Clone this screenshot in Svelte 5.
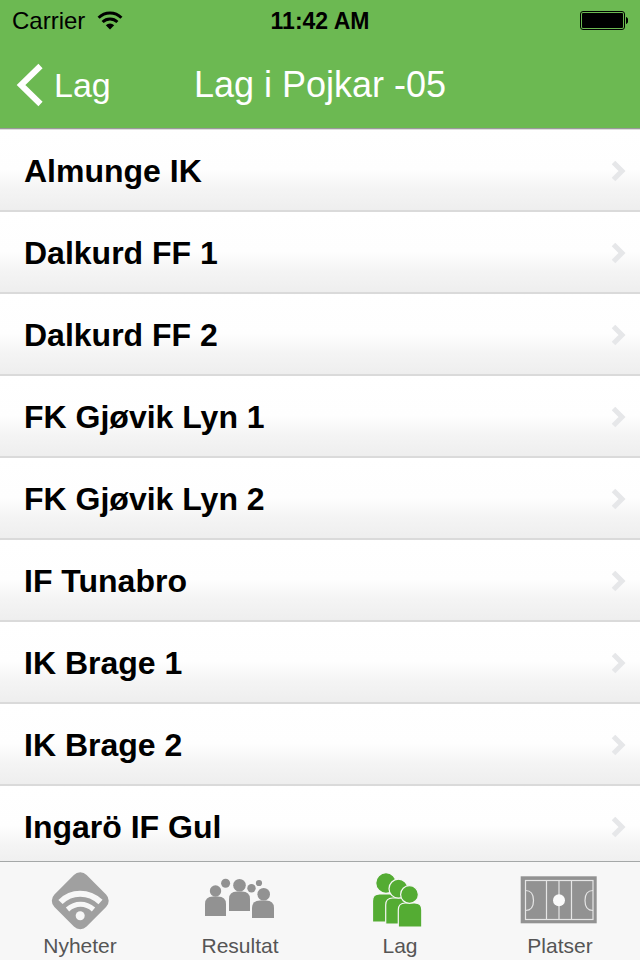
<script lang="ts">
	interface Tab {
		id: string;
		label: string;
	}

	const teams = [
		'Almunge IK',
		'Dalkurd FF 1',
		'Dalkurd FF 2',
		'FK Gjøvik Lyn 1',
		'FK Gjøvik Lyn 2',
		'IF Tunabro',
		'IK Brage 1',
		'IK Brage 2',
		'Ingarö IF Gul'
	];

	const tabs: Tab[] = [
		{ id: 'news', label: 'Nyheter' },
		{ id: 'results', label: 'Resultat' },
		{ id: 'teams', label: 'Lag' },
		{ id: 'places', label: 'Platser' }
	];

	let active = $state('teams');
</script>

<div class="app">
	<header>
		<div class="status">
			<div class="carrier">
				<span>Carrier</span>
				<svg width="26" height="20" viewBox="0 0 26 20" aria-hidden="true">
					<g fill="none" stroke="#000" stroke-width="3">
						<path d="M1.6 6.8a16.2 16.2 0 0 1 22.8 0" />
						<path d="M5.6 11a10.6 10.6 0 0 1 14.8 0" />
					</g>
					<path d="M8.8 14.2a6 6 0 0 1 8.4 0L13 18.6z" />
				</svg>
			</div>
			<div class="time">11:42 AM</div>
			<div class="battery">
				<svg width="48" height="20" viewBox="0 0 48 20" aria-label="Battery full" role="img">
					<rect x="0.5" y="0.5" width="44" height="18" rx="2.5" fill="none" stroke="#000" />
					<rect x="2" y="2" width="41" height="15" rx="1" />
					<path d="M46 6c3 1 3 6 0 7z" />
				</svg>
			</div>
		</div>

		<nav class="navbar" aria-label="Navigation">
			<button class="back" type="button">
				<svg width="28" height="44" viewBox="0 0 28 44" aria-hidden="true">
					<path d="M24.5 3 5 22l19.5 19" fill="none" stroke="#fff" stroke-width="6" />
				</svg>
				Lag
			</button>
			<h1>Lag i Pojkar -05</h1>
		</nav>
	</header>

	<main>
		<ul>
			{#each teams as team}
				<li>
					<a href="#team">
						<span>{team}</span>
						<svg width="16" height="22" viewBox="0 0 16 22" aria-hidden="true">
							<path d="M2.5 2.5 11 11l-8.500 8.500" fill="none" stroke="#e6e7e9" stroke-width="5" />
						</svg>
					</a>
				</li>
			{/each}
		</ul>
	</main>

	<nav class="tabbar" aria-label="Tabs">
		{#each tabs as tab}
			<button
				type="button"
				aria-current={active === tab.id ? 'page' : undefined}
				onclick={() => (active = tab.id)}
			>
				<svg width="80" height="60" viewBox="0 0 80 60" aria-hidden="true">
					{#if tab.id === 'news'}
						<rect x="17.5" y="8" width="45.5" height="45.5" rx="9" transform="rotate(45 40.25 30.75)" fill="#a0a0a0" />
						<g fill="none" stroke="#f7f7f7">
							<path d="M20.5 32c11-11 28-11 40 0" stroke-width="6" />
							<path d="M27.500 39.500c8-7 18-7 26 0" stroke-width="5" />
						</g>
						<circle cx="40.2" cy="45.700" r="4.500" fill="#f7f7f7" />
					{:else if tab.id === 'results'}
						<g fill="#929292">
							<circle cx="15.5" cy="21" r="5.7" />
							<path d="M5 46V34q0-7.500 8-7.500h5q8 0 8 7.500v12z" />
							<circle cx="39.5" cy="15.3" r="6.300" />
							<path d="M29 41V29q0-7.500 8-7.500h5q8 0 8 7.500v12z" />
							<circle cx="63.7" cy="24.2" r="6.300" />
							<path d="M52 48V38q0-7.500 8-7.500h6q8 0 8 7.500v10z" />
							<circle cx="25.6" cy="13.2" r="4.500" />
							<circle cx="51.5" cy="18.3" r="4.200" />
							<circle cx="59" cy="13" r="3.1" />
						</g>
					{:else if tab.id === 'teams'}
						<g fill="#54ac33" stroke="#f7f7f7" stroke-width="1.2">
							<path d="M12.500 52V31q0-7 7-7h13q7 0 7 7v21z" />
							<circle cx="26" cy="13" r="10.3" />
							<path d="M25.700 54V35q0-7 7-7h10q7 0 7 7v19z" />
							<circle cx="38.5" cy="18.7" r="9.5" />
							<path d="M38.300 57V40q0-7 7-7h9.500q7 0 7 7v17z" />
							<circle cx="49.5" cy="24.5" r="8.9" />
						</g>
					{:else}
						<rect x="0.7" y="6.3" width="76" height="47" fill="#929292" />
						<g fill="none" stroke="#e6e6e6" stroke-width="1.2">
							<rect x="5.5" y="10.5" width="67.5" height="39" />
							<path d="M26.500 10.500v39M39 10.500v39M51.500 10.500v39" />
							<path d="M5.500 20.500q8 0 8 10t-8 10M73 20.500q-8 0-8 10t8 10" />
						</g>
						<circle cx="39" cy="30.2" r="6" fill="#fafafa" />
					{/if}
				</svg>
				<span>{tab.label}</span>
			</button>
		{/each}
	</nav>
</div>

<style>
	:global(body) {
		margin: 0;
	}

	.app {
		display: flex;
		flex-direction: column;
		height: 100vh;
		overflow: hidden;
		background: #fff;
		font-family: 'Liberation Sans', Arial, sans-serif;
		color: #000;
	}

	button {
		padding: 0;
		border: 0;
		background: none;
		font: inherit;
		color: inherit;
	}

	svg {
		display: block;
		flex-shrink: 0;
	}

	/* Header */
	header {
		flex-shrink: 0;
		background: #6cb952;
		border-bottom: 1px solid #999;
	}

	.status,
	.navbar {
		display: grid;
		grid-template-columns: 1fr auto 1fr;
		align-items: center;
	}

	.status {
		height: 42px;
		padding: 0 12px;
		font-size: 24px;
	}

	.carrier {
		display: flex;
		align-items: center;
		gap: 12px;
	}

	.time {
		font-size: 23px;
		font-weight: 700;
	}

	.battery {
		justify-self: end;
	}

	.navbar {
		height: 86px;
		padding: 0 16px;
		color: #fff;
	}

	.back {
		display: flex;
		align-items: center;
		justify-self: start;
		gap: 10px;
		font-size: 34px;
	}

	h1 {
		margin: 0;
		font-size: 36px;
		font-weight: 400;
	}

	/* Team list */
	main {
		flex: 1;
		min-height: 0;
		overflow: hidden;
		border-top: 1px solid #ddd;
	}

	ul {
		margin: 0;
		padding: 0;
		list-style: none;
	}

	li a {
		display: flex;
		align-items: center;
		justify-content: space-between;
		box-sizing: border-box;
		height: 82px;
		padding: 2px 13px 0 24px;
		border-bottom: 2px solid #dadada;
		background: linear-gradient(#fff 0%, #fefefe 50%, #f4f4f4 75%, #eee 100%);
		font-size: 32px;
		font-weight: 700;
		color: #000;
		text-decoration: none;
	}

	/* Tab bar */
	.tabbar {
		display: grid;
		grid-template-columns: repeat(4, 1fr);
		flex-shrink: 0;
		height: 98px;
		border-top: 1px solid #a5a8a8;
		background: #f7f7f7;
	}

	.tabbar button {
		display: flex;
		flex-direction: column;
		align-items: center;
		padding-top: 8px;
		font-size: 21px;
		line-height: 32px;
		color: #555;
	}
</style>
